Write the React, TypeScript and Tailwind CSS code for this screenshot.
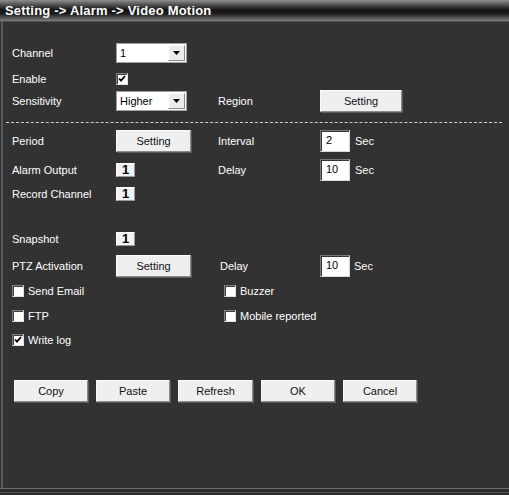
import type { ReactNode } from "react";

const FONT = "font-['Tahoma','Liberation_Sans',sans-serif]";

function Btn({ children, w = "w-[75px]" }: { children: ReactNode; w?: string }) {
  return (
    <button
      type="button"
      className={`${w} h-[22px] bg-[#efefef] text-[11px] text-[#111] border border-t-[#fafafa] border-l-[#fafafa] border-r-[#8a8a8a] border-b-[#8a8a8a] shadow-[1px_1px_0_#5a5a5a] flex items-center justify-center`}
    >
      {children}
    </button>
  );
}

function Select({ value }: { value: string }) {
  return (
    <div className="w-[71px] h-[20px] bg-white border border-[#a0a0a0] flex items-stretch p-[1px]">
      <span className="flex-1 text-[11px] text-black leading-[16px] pl-[2px]">{value}</span>
      <span className="w-[17px] bg-[#ececec] border border-t-[#fff] border-l-[#fff] border-r-[#888] border-b-[#888] flex items-center justify-center">
        <svg width="7" height="4" viewBox="0 0 7 4">
          <path d="M0 0h7L3.5 4z" fill="#000" />
        </svg>
      </span>
    </div>
  );
}

function Check({ on = false }: { on?: boolean }) {
  return (
    <span className="w-[12px] h-[12px] bg-white border border-t-[#808080] border-l-[#808080] border-r-[#e0e0e0] border-b-[#e0e0e0] shadow-[inset_1px_1px_0_#404040] flex items-center justify-center shrink-0">
      {on && (
        <svg width="8" height="8" viewBox="0 0 8 8">
          <path d="M1 3.5l2 2.2L7 1" stroke="#000" strokeWidth="1.8" fill="none" />
        </svg>
      )}
    </span>
  );
}

function NumBox() {
  return (
    <span className="w-[19px] h-[14px] bg-[#f2f2f2] border border-t-[#fff] border-l-[#fff] border-r-[#9a9a9a] border-b-[#9a9a9a] text-[13px] font-bold text-black leading-[12px] flex items-center justify-center">
      1
    </span>
  );
}

function Input({ value }: { value: string }) {
  return (
    <span className="w-[30px] h-[22px] bg-white border border-t-[#7a7a7a] border-l-[#7a7a7a] border-r-[#d8d8d8] border-b-[#d8d8d8] shadow-[inset_1px_1px_0_#333] text-[11px] text-black pl-[5px] leading-[16px] pt-[1px]">
      {value}
    </span>
  );
}

function Row({ top, children }: { top: string; children: ReactNode }) {
  return <div className={`${top} h-[22px] flex items-center`}>{children}</div>;
}

// fixed column cells: label 12→116, control 116→218, right label 218→320
function Label({ children }: { children?: ReactNode }) {
  return <span className="w-[104px] shrink-0">{children}</span>;
}
function Cell({ children }: { children?: ReactNode }) {
  return <span className="w-[102px] shrink-0 flex items-center">{children}</span>;
}
function RLabel({ children, pad = "" }: { children?: ReactNode; pad?: string }) {
  return <span className={`w-[102px] shrink-0 ${pad}`}>{children}</span>;
}

export default function App() {
  return (
    <div className={`${FONT} w-[509px] h-[495px] bg-[#323232] text-white text-[11px] flex flex-col overflow-hidden`}>
      <div className="h-[22px] shrink-0 bg-[linear-gradient(to_bottom,#8e8e8e_0%,#505050_22%,#141414_45%,#1c1c1c_62%,#5e5e5e_85%,#7a7a7a_94%,#3a3a3a_100%)] flex items-center pl-[5px]">
        <span className="text-[13px] font-bold text-white tracking-[0.2px]">Setting -&gt; Alarm -&gt; Video Motion</span>
      </div>

      <div className="flex-1 border-l-[2px] border-l-[#585858] ml-[1px] pl-[9px] flex flex-col">
        <Row top="mt-[20px]">
          <Label>Channel</Label>
          <Select value="1" />
        </Row>
        <Row top="mt-[4px]">
          <Label>Enable</Label>
          <Check on />
        </Row>
        <Row top="mt-[0px]">
          <Label>Sensitivity</Label>
          <Cell>
            <Select value="Higher" />
          </Cell>
          <RLabel>Region</RLabel>
          <Btn w="w-[82px]">Setting</Btn>
        </Row>

        <div className="mt-[10px] mr-[7px] -ml-[6px] border-t border-dashed border-[#d0d0d0]" />

        <Row top="mt-[7px]">
          <Label>Period</Label>
          <Cell>
            <Btn>Setting</Btn>
          </Cell>
          <RLabel>Interval</RLabel>
          <Input value="2" />
          <span className="pl-[5px]">Sec</span>
        </Row>
        <Row top="mt-[7px]">
          <Label>Alarm Output</Label>
          <Cell>
            <NumBox />
          </Cell>
          <RLabel>Delay</RLabel>
          <Input value="10" />
          <span className="pl-[5px]">Sec</span>
        </Row>
        <Row top="mt-[2px]">
          <Label>Record Channel</Label>
          <NumBox />
        </Row>
        <Row top="mt-[23px]">
          <Label>Snapshot</Label>
          <NumBox />
        </Row>
        <Row top="mt-[5px]">
          <Label>PTZ Activation</Label>
          <Cell>
            <Btn>Setting</Btn>
          </Cell>
          <RLabel pad="pl-[2px]">Delay</RLabel>
          <Input value="10" />
          <span className="pl-[4px]">Sec</span>
        </Row>
        <Row top="mt-[3px]">
          <span className="w-[212px] shrink-0 flex items-center gap-[4px]">
            <Check />
            Send Email
          </span>
          <span className="flex items-center gap-[4px]">
            <Check />
            Buzzer
          </span>
        </Row>
        <Row top="mt-[3px]">
          <span className="w-[212px] shrink-0 flex items-center gap-[4px]">
            <Check />
            FTP
          </span>
          <span className="flex items-center gap-[4px]">
            <Check />
            Mobile reported
          </span>
        </Row>
        <Row top="mt-[2px]">
          <span className="flex items-center gap-[4px]">
            <Check on />
            Write log
          </span>
        </Row>

        <div className="mt-[29px] ml-[2px] flex gap-[8px]">
          <Btn w="w-[74px]">Copy</Btn>
          <Btn w="w-[74px]">Paste</Btn>
          <Btn w="w-[75px]">Refresh</Btn>
          <Btn w="w-[74px]">OK</Btn>
          <Btn w="w-[74px]">Cancel</Btn>
        </div>
      </div>

      <div className="h-[7px] shrink-0 bg-[#2a2a2a] border-t border-[#6a6a6a] flex flex-col">
        <div className="mt-[3px] h-px bg-[#555]" />
      </div>
    </div>
  );
}
